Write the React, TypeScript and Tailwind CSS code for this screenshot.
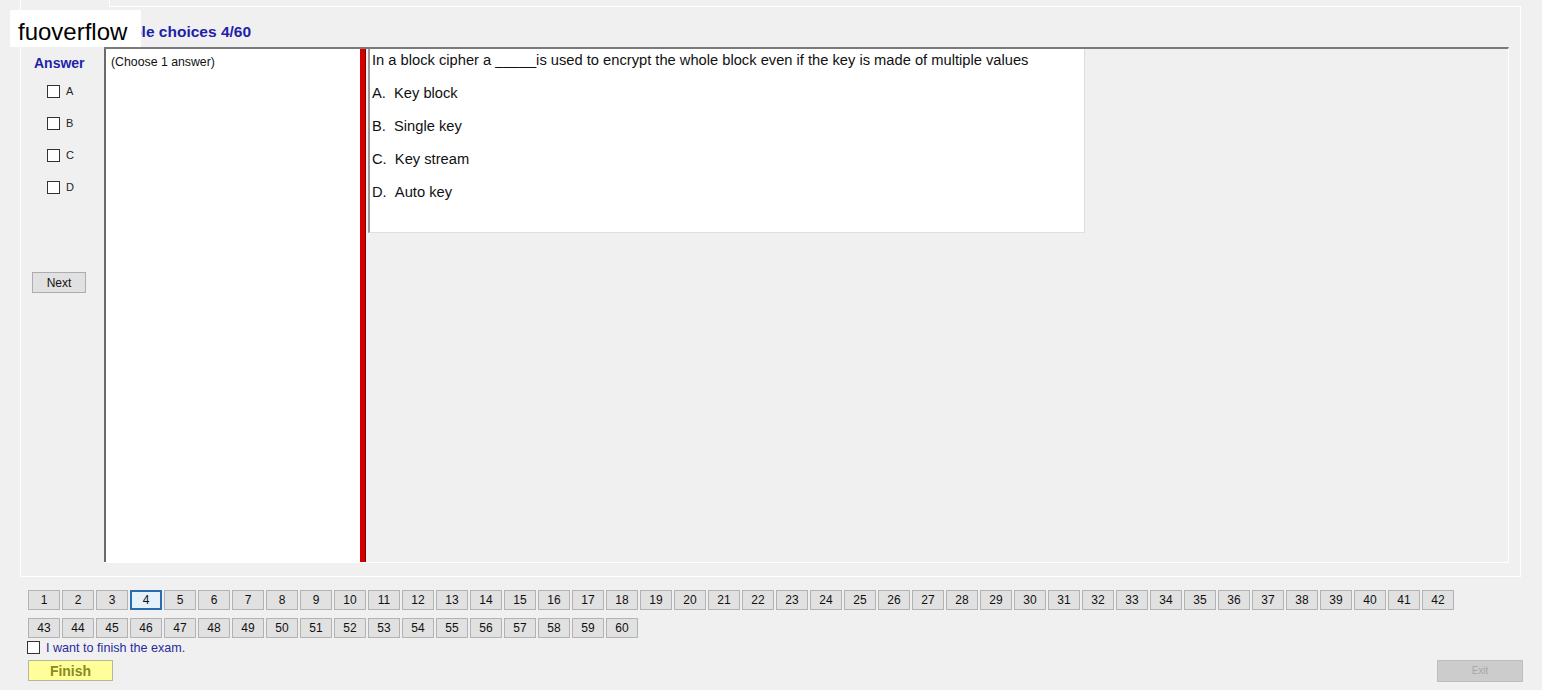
import React from "react";

const nums1 = Array.from({ length: 42 }, (_, i) => i + 1);
const nums2 = Array.from({ length: 18 }, (_, i) => i + 43);

function NumBtn({ n }: { n: number }) {
  const active = n === 4;
  return (
    <div
      className={
        "w-[32px] h-[20px] flex items-center justify-center text-[12px] leading-none text-[#111] " +
        (active
          ? "bg-[#e5f1fb] border-2 border-[#2b6cb0]"
          : "bg-[#e1e1e1] border border-[#b3b3b3]")
      }
    >
      {n}
    </div>
  );
}

function Check() {
  return <div className="w-[13px] h-[13px] border border-[#333] bg-white" />;
}

export default function App() {
  return (
    <div
      className="relative w-[1542px] h-[690px] overflow-hidden bg-[#f0f0f0] text-black"
      style={{ fontFamily: '"Liberation Sans", Arial, sans-serif' }}
    >
      {/* tab strip */}
      <div className="h-[7px] flex">
        <div className="ml-[20px] w-[90px] h-[7px] border-l border-r border-white" />
        <div className="flex-1 mt-[6px] mr-[21px] border-t border-white" />
      </div>

      {/* tab panel */}
      <div className="ml-[20px] w-[1501px] h-[570px] border-l border-r border-b border-white flex flex-col">
        {/* title */}
        <div className="h-[40px] flex items-end pb-[8px] pl-[75px]">
          <span className="text-[15.5px] font-bold text-[#1f1fa8] leading-none">
            Multiple choices 4/60
          </span>
        </div>

        {/* content */}
        <div className="flex h-[516px]">
          {/* answer column */}
          <div className="w-[83px] flex flex-col">
            <div className="pl-[13px] pt-[9px] text-[14px] font-bold text-[#1f1fa8] leading-none">
              Answer
            </div>
            <div className="pl-[26px] pt-[15px] flex flex-col gap-[19px]">
              {["A", "B", "C", "D"].map((l) => (
                <div key={l} className="flex items-center gap-[6px] h-[13px]">
                  <Check />
                  <span className="text-[11px] leading-none text-[#222]">{l}</span>
                </div>
              ))}
            </div>
            <div className="ml-[11px] mt-[78px] w-[54px] h-[21px] bg-[#e1e1e1] border border-[#adadad] flex items-center justify-center text-[12px] text-[#111]">
              Next
            </div>
          </div>

          {/* main area */}
          <div className="flex-1 mr-[11px] border-t-2 border-[#7b7b7b] border-r border-b border-r-white border-b-white flex">
            <div className="w-[256px] h-full bg-white border-l-2 border-[#6b6b6b] pl-[5px] pt-[4px] text-[12.3px] text-[#111]">
              (Choose 1 answer)
            </div>
            <div className="w-[6px] h-full bg-[#d40000] border-r border-[#7a0000]" />
            <div className="ml-[2px] w-[717px] h-[184px] bg-white border-l-2 border-[#9a9a9a] border-b border-b-[#e0e0e0] border-r border-r-[#dcdcdc] pl-[2px] pt-[3px] text-[14.7px] text-[#111] leading-[16px]">
              <div>In a block cipher a _____is used to encrypt the whole block even if the key is made of multiple values</div>
              <div className="mt-[17px] flex flex-col gap-[17px]">
                <div>A.&nbsp;&nbsp;Key block</div>
                <div>B.&nbsp;&nbsp;Single key</div>
                <div>C.&nbsp;&nbsp;Key stream</div>
                <div>D.&nbsp;&nbsp;Auto key</div>
              </div>
            </div>
          </div>
        </div>
      </div>

      {/* number buttons */}
      <div className="ml-[28px] mt-[13px] flex flex-col gap-[8px]">
        <div className="flex gap-[2px]">
          {nums1.map((n) => (
            <NumBtn key={n} n={n} />
          ))}
        </div>
        <div className="flex gap-[2px]">
          {nums2.map((n) => (
            <NumBtn key={n} n={n} />
          ))}
        </div>
      </div>

      <div className="ml-[27px] mt-[2px] flex items-center gap-[6px] h-[14px]">
        <Check />
        <span className="text-[12.6px] leading-none text-[#2a2a9c] mt-[3px]">I want to finish the exam.</span>
      </div>

      <div className="mt-[6px] flex justify-between items-start">
        <div className="ml-[28px] w-[85px] h-[21px] bg-[#ffff99] border border-[#b5b5a0] flex items-center justify-center text-[14px] font-bold text-[#8a8a20] leading-none">
          Finish
        </div>
        <div className="mr-[19px] w-[86px] h-[22px] bg-[#cccccc] border border-[#bdbdbd] flex items-center justify-center text-[10px] text-[#a8a8a8] leading-none">
          Exit
        </div>
      </div>

      {/* overlay badge */}
      <div className="absolute left-[10px] top-[10px] w-[131px] h-[37px] bg-white flex items-center pl-[8px] pt-[6px] text-[24px] text-black leading-none">
        fuoverflow
      </div>
    </div>
  );
}
